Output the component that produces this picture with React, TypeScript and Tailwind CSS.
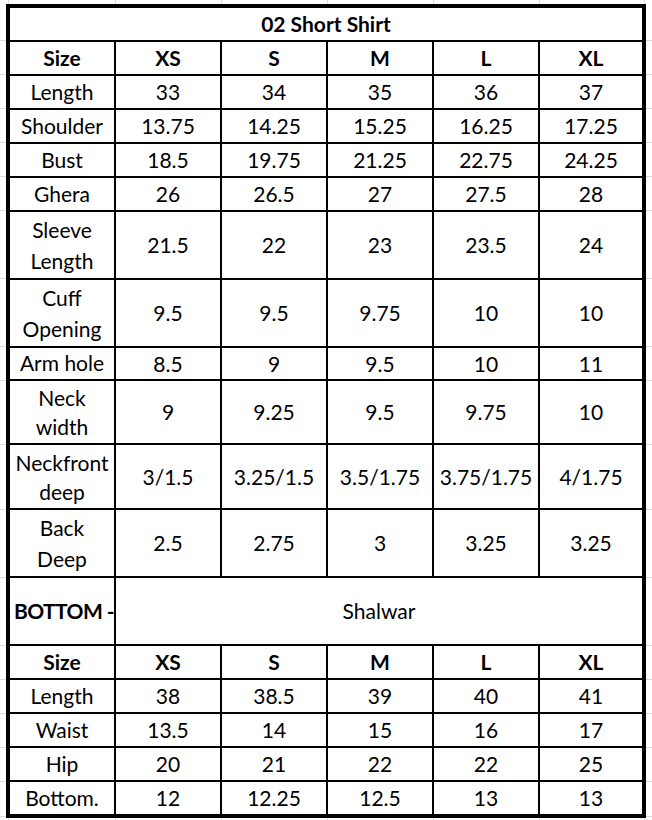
import React from 'react';

type Row = { label: string[]; vals: string[]; h: string; lead: string };

const sizes = ['XS', 'S', 'M', 'L', 'XL'];

const shirt: Row[] = [
  { label: ['Length'], vals: ['33', '34', '35', '36', '37'], h: 'h-[34px]', lead: 'leading-[24px]' },
  { label: ['Shoulder'], vals: ['13.75', '14.25', '15.25', '16.25', '17.25'], h: 'h-[34px]', lead: 'leading-[24px]' },
  { label: ['Bust'], vals: ['18.5', '19.75', '21.25', '22.75', '24.25'], h: 'h-[34px]', lead: 'leading-[24px]' },
  { label: ['Ghera'], vals: ['26', '26.5', '27', '27.5', '28'], h: 'h-[34px]', lead: 'leading-[24px]' },
  { label: ['Sleeve', 'Length'], vals: ['21.5', '22', '23', '23.5', '24'], h: 'h-[68px]', lead: 'leading-[31px]' },
  { label: ['Cuff', 'Opening'], vals: ['9.5', '9.5', '9.75', '10', '10'], h: 'h-[68px]', lead: 'leading-[31px]' },
  { label: ['Arm hole'], vals: ['8.5', '9', '9.5', '10', '11'], h: 'h-[33px]', lead: 'leading-[24px]' },
  { label: ['Neck', 'width'], vals: ['9', '9.25', '9.5', '9.75', '10'], h: 'h-[64px]', lead: 'leading-[29px]' },
  { label: ['Neckfront', 'deep'], vals: ['3/1.5', '3.25/1.5', '3.5/1.75', '3.75/1.75', '4/1.75'], h: 'h-[65px]', lead: 'leading-[29px]' },
  { label: ['Back', 'Deep'], vals: ['2.5', '2.75', '3', '3.25', '3.25'], h: 'h-[68px]', lead: 'leading-[31px]' },
];

const shalwar: Row[] = [
  { label: ['Length'], vals: ['38', '38.5', '39', '40', '41'], h: 'h-[34px]', lead: 'leading-[24px]' },
  { label: ['Waist'], vals: ['13.5', '14', '15', '16', '17'], h: 'h-[34px]', lead: 'leading-[24px]' },
  { label: ['Hip'], vals: ['20', '21', '22', '22', '25'], h: 'h-[34px]', lead: 'leading-[24px]' },
];

const grid = 'border-b border-[#dadada]';
const cell = 'border-2 border-black text-center align-middle p-0';

const Gutter = () => <td className={grid} />;

const SizeRow = () => (
  <tr className="h-[34px] font-bold">
    <Gutter />
    <td className={`${cell} border-l-4`}>Size</td>
    {sizes.map((s, i) => (
      <td key={s} className={`${cell} ${i === 4 ? 'border-r-4' : ''}`}>
        {s}
      </td>
    ))}
    <Gutter />
  </tr>
);

const DataRow = ({ row, last }: { row: Row; last?: boolean }) => (
  <tr className={row.h}>
    <Gutter />
    <td className={`${cell} border-l-4 ${row.lead} ${last ? 'border-b-4' : ''}`}>
      {row.label.map((l) => (
        <div key={l} className="whitespace-nowrap">
          {l}
        </div>
      ))}
    </td>
    {row.vals.map((v, i) => (
      <td key={i} className={`${cell} ${i === 4 ? 'border-r-4' : ''} ${last ? 'border-b-4' : ''}`}>
        {v}
      </td>
    ))}
    <Gutter />
  </tr>
);

export default function App() {
  return (
    <div className="w-[652px] h-[820px] overflow-hidden bg-white text-black font-['Lato',sans-serif] text-[21px]">
      <table className="w-[652px] table-fixed border-collapse">
        <colgroup>
          <col className="w-[8px]" />
          <col className="w-[107px]" />
          <col className="w-[106px]" />
          <col className="w-[106px]" />
          <col className="w-[106px]" />
          <col className="w-[106px]" />
          <col className="w-[105px]" />
          <col className="w-[8px]" />
        </colgroup>
        <tbody>
          {/* spreadsheet grid above the table */}
          <tr className="h-[6px]">
            <td className="border-r border-[#dadada]" />
            {[0, 1, 2, 3, 4, 5].map((i) => (
              <td key={i} className="border-r border-[#dadada]" />
            ))}
            <td />
          </tr>

          <tr className="h-[33px]">
            <Gutter />
            <td colSpan={6} className="border-4 border-b-2 border-black text-center align-middle font-bold p-0">
              02 Short Shirt
            </td>
            <Gutter />
          </tr>

          <SizeRow />
          {shirt.map((r) => (
            <DataRow key={r.label.join(' ')} row={r} />
          ))}

          <tr className="h-[68px]">
            <Gutter />
            <td className={`${cell} border-l-4 text-left font-bold whitespace-nowrap pl-[4px] tracking-[-0.6px]`}>
              BOTTOM -
            </td>
            <td colSpan={5} className={`${cell} border-r-4`}>
              Shalwar
            </td>
            <Gutter />
          </tr>

          <SizeRow />
          {shalwar.map((r) => (
            <DataRow key={r.label.join(' ')} row={r} />
          ))}
          <DataRow
            row={{ label: ['Bottom.'], vals: ['12', '12.25', '12.5', '13', '13'], h: 'h-[35px]', lead: 'leading-[24px]' }}
            last
          />

          {/* spreadsheet grid below the table */}
          <tr className="h-[8px]">
            <td className="border-r border-[#dadada]" />
            {[0, 1, 2, 3, 4, 5].map((i) => (
              <td key={i} className="border-r border-[#dadada]" />
            ))}
            <td />
          </tr>
        </tbody>
      </table>
    </div>
  );
}
